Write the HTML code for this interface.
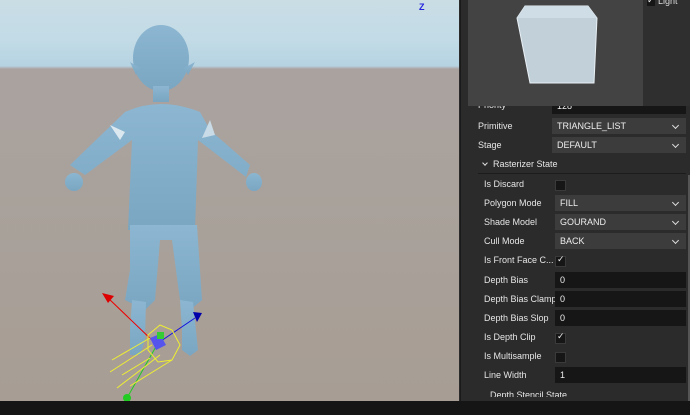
<!DOCTYPE html>
<html><head><style>
body{margin:0;width:690px;height:415px;overflow:hidden;background:#2b2b2b;font-family:"Liberation Sans",sans-serif;font-size:9px;color:#ddd;position:relative}
.vp{position:absolute;left:0;top:0;width:459px;height:401px;background:linear-gradient(#cadde5 0,#c2dbe6 40px,#b6d3e2 66px,#aaa29f 69px,#a9a29c 180px,#a79d94 400px)}
.bb{position:absolute;left:0;top:401px;width:690px;height:14px;background:#151515;z-index:5}
.panel{position:absolute;left:460px;top:0;width:230px;height:401px;background:#2b2b2b;border-left:1px solid #1a1a1a}
.prev{position:absolute;left:468px;top:0;width:175px;height:106px;background:#434343;z-index:3}
.light{position:absolute;left:643px;top:0;width:47px;height:106px;background:#2f2f2f;z-index:3}
.row{position:absolute;left:484px;width:200px;height:16px;line-height:16px;color:#e6e6e6}
.in{position:absolute;left:555px;width:131px;height:16px;background:#161616;color:#eee;padding-left:5px;box-sizing:border-box;line-height:16px}
.sel{background:#3c3c3c}
.sel:after{content:"";position:absolute;right:8px;top:5px;width:4px;height:4px;border-right:1px solid #ddd;border-bottom:1px solid #ddd;transform:rotate(45deg)}
.cb{position:absolute;left:555px;width:9px;height:9px;background:#161616;border:1px solid #3a3a3a}
.ck:after{content:"✓";position:absolute;left:1px;top:-3px;font-size:9px;color:#eee}
</style></head><body>
<div class="vp">
<svg width="459" height="401" style="position:absolute;left:0;top:0">
<defs><linearGradient id="g" x1="0" y1="0" x2="0" y2="1"><stop offset="0" stop-color="#8cb6d1"/><stop offset="1" stop-color="#7aa6c2"/></linearGradient></defs>
<g fill="url(#g)">
<ellipse cx="161" cy="58" rx="28" ry="33"/>
<polygon points="130,62 136,75 140,68"/><polygon points="195,62 188,75 184,68"/>
<rect x="153" y="86" width="16" height="16"/>
<path d="M125 112 Q160 96 200 112 L210 130 L250 165 L246 177 L198 140 L195 230 L128 230 L132 140 L85 175 L70 165 Z"/>
<ellipse cx="74" cy="182" rx="9" ry="9"/><ellipse cx="254" cy="182" rx="8" ry="9"/>
<path d="M130 225 L197 225 L200 270 L202 300 L190 310 L180 300 L172 240 L160 240 L155 300 L145 310 L125 300 L130 270 Z"/>
<path d="M132 300 L146 302 L145 340 L140 355 L130 355 L130 330 Z"/>
<path d="M180 300 L193 302 L198 350 L190 356 L182 350 L182 330 Z"/>
</g>
<polygon points="110,125 125,132 120,140" fill="#dce8ef"/><polygon points="210,120 215,135 202,138" fill="#c8dbe6"/>
<line x1="155" y1="343" x2="107" y2="297" stroke="#e00" stroke-width="1"/><polygon points="102,293 114,296 108,303" fill="#d00"/>
<line x1="158" y1="343" x2="195" y2="318" stroke="#11d" stroke-width="1"/><polygon points="193,312 202,313 197,322" fill="#00a"/>
<line x1="158" y1="343" x2="127" y2="398" stroke="#2c2" stroke-width="1"/><circle cx="127" cy="398" r="4" fill="#2c2"/>
<polygon points="150,338 160,334 166,345 156,350" fill="#5555ee"/><rect x="157" y="332" width="7" height="7" fill="#3c3"/>
<g stroke="#ee3" stroke-width="1" fill="none"><polygon points="148,335 160,325 172,330 180,345 172,360 158,362 148,350"/>
<path d="M112 360 L150 338 M110 372 L152 345 M117 388 L160 355 M130 386 L172 360 M122 375 L150 358"/></g>
<text x="419" y="10" fill="#22d" font-size="9" font-weight="bold" font-family="Liberation Sans">Z</text>
</svg>
</div>
<div class="bb"></div>
<div class="panel"></div>
<div class="prev"><svg width="175" height="106"><polygon points="57,6 120,6 129,18 126,83 62,83 49,18" fill="#c2d0da" stroke="#e8f0f5" stroke-width="1"/><polygon points="57,6 120,6 129,18 49,18" fill="#cfdde6"/></svg></div>
<div class="light"><div style="position:absolute;left:4px;top:-2px;width:8px;height:8px;background:#161616"></div><span style="position:absolute;left:4px;top:-5px;color:#eee">✓</span><span style="position:absolute;left:15px;top:-4px;color:#ddd">Light</span></div>
<div class="row" style="top:97px;left:478px">Priority</div><div class="in" style="top:98px;left:552px;width:134px">128</div>
<div class="row" style="top:118px;left:478px">Primitive</div><div class="in sel" style="top:118px;left:552px;width:134px">TRIANGLE_LIST</div>
<div class="row" style="top:137px;left:478px">Stage</div><div class="in sel" style="top:137px;left:552px;width:134px">DEFAULT</div>
<div class="row" style="top:156px;left:481px"><span style="display:inline-block;width:3px;height:3px;border-right:1px solid #ddd;border-bottom:1px solid #ddd;transform:rotate(45deg);margin:0 6px 2px 2px"></span>Rasterizer State</div>
<div style="position:absolute;left:478px;top:173px;width:208px;height:1px;background:#1c1c1c"></div>
<div class="row" style="top:176px">Is Discard</div><div class="cb" style="top:180px"></div>
<div class="row" style="top:195px">Polygon Mode</div><div class="in sel" style="top:195px">FILL</div>
<div class="row" style="top:214px">Shade Model</div><div class="in sel" style="top:214px">GOURAND</div>
<div class="row" style="top:233px">Cull Mode</div><div class="in sel" style="top:233px">BACK</div>
<div class="row" style="top:252px">Is Front Face C...</div><div class="cb ck" style="top:256px"></div>
<div class="row" style="top:272px">Depth Bias</div><div class="in" style="top:272px">0</div>
<div class="row" style="top:291px">Depth Bias Clamp</div><div class="in" style="top:291px">0</div>
<div class="row" style="top:310px">Depth Bias Slop</div><div class="in" style="top:310px">0</div>
<div class="row" style="top:329px">Is Depth Clip</div><div class="cb ck" style="top:333px"></div>
<div class="row" style="top:348px">Is Multisample</div><div class="cb" style="top:352px"></div>
<div class="row" style="top:367px">Line Width</div><div class="in" style="top:367px">1</div>
<div class="row" style="top:387px;left:490px;height:10px;overflow:hidden;line-height:16px">Depth Stencil State</div>
<div style="position:absolute;left:688px;top:175px;width:2px;height:226px;background:#555"></div>
</body></html>
